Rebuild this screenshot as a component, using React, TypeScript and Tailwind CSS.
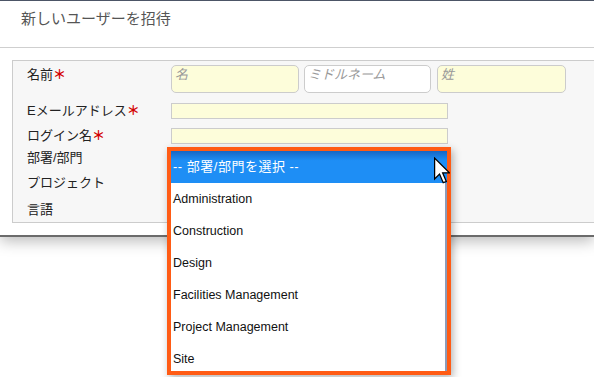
import React from "react"

const options = [
  "Administration",
  "Construction",
  "Design",
  "Facilities Management",
  "Project Management",
  "Site",
]

function Req() {
  return <span className="text-[13px] font-bold text-[#d40000]">＊</span>
}

function Cursor() {
  return (
    <svg width="16" height="28" viewBox="0 0 13 22" className="absolute left-[434px] top-[157px]">
      <path d="M0.5 0.5 L0.5 17.5 L4.5 13.5 L7.5 20.5 L10 19.5 L7 12.5 L12.5 12.5 Z" fill="#fff" stroke="#000" strokeWidth="1" />
    </svg>
  )
}

export default function App() {
  return (
    <div className="relative h-[377px] w-[594px] overflow-hidden bg-white font-['Liberation_Sans','Noto_Sans_CJK_JP',sans-serif]">
      <div className="border-t border-[#4c5566] border-b-2 border-b-[#6b6b6b] bg-white shadow-[0_4px_14px_rgba(0,0,0,0.28)]">
        <div className="h-[47px] border-b border-[#cfcfcf] pl-[21px] pt-[8px] text-[15px] leading-[20px] text-[#555]">
          新しいユーザーを招待
        </div>
        <div className="pb-[12px] pl-[12px] pt-[12px]">
          <div className="box-border h-[163px] border border-r-0 border-[#cccccc] bg-[#f7f7f7] pl-[14px] text-[13px] text-[#222]">
            <div className="mt-[4px] flex h-[28px]">
              <div className="w-[144px] pt-[2px] leading-[16px]">
                名前<Req />
              </div>
              <div className="w-[128px] rounded-[5px] border border-[#cccccc] bg-[#fdfdda] px-[3px] pt-[1px] italic leading-[16px] text-[#999]">名</div>
              <div className="ml-[5px] w-[127px] rounded-[5px] border border-[#cccccc] bg-white px-[3px] pt-[1px] italic leading-[16px] text-[#999]">ミドルネーム</div>
              <div className="ml-[6px] w-[129px] rounded-[5px] border border-[#cccccc] bg-[#fdfdda] px-[3px] pt-[1px] italic leading-[16px] text-[#999]">姓</div>
            </div>
            <div className="mt-[10px] flex h-[16px] items-center">
              <div className="w-[144px] leading-[16px]">
                Eメールアドレス<Req />
              </div>
              <div className="h-[16px] w-[277px] border border-[#cccccc] bg-[#fdfdda]" />
            </div>
            <div className="mt-[9px] flex h-[16px] items-center">
              <div className="w-[144px] leading-[16px]">
                ログイン名<Req />
              </div>
              <div className="h-[16px] w-[277px] border border-[#cccccc] bg-[#fdfdda]" />
            </div>
            <div className="mt-[6px] h-[16px] leading-[16px]">部署/部門</div>
            <div className="mt-[9px] h-[16px] leading-[16px]">プロジェクト</div>
            <div className="mt-[11px] h-[16px] leading-[16px]">言語</div>
          </div>
        </div>
      </div>

      <div className="absolute left-[167px] top-[147px] box-border h-[228px] w-[284px] overflow-hidden border-4 border-[#ff5b14] bg-white shadow-[2px_3px_8px_rgba(0,0,0,0.3)]">
        <div className="flex h-[32px] items-center bg-[linear-gradient(to_bottom,#1766c4,#1e8ef5_30%,#1e8ef5)] pl-[2px] text-[13px] tracking-[0.5px] text-white">
          -- 部署/部門を選択 --
        </div>
        <div className="border-r-2 border-[#8c9bb9]">
          {options.map((o) => (
            <div key={o} className="flex h-[32px] items-center pl-[2px] text-[12.5px] text-[#111]">
              {o}
            </div>
          ))}
        </div>
      </div>

      <Cursor />
    </div>
  )
}
